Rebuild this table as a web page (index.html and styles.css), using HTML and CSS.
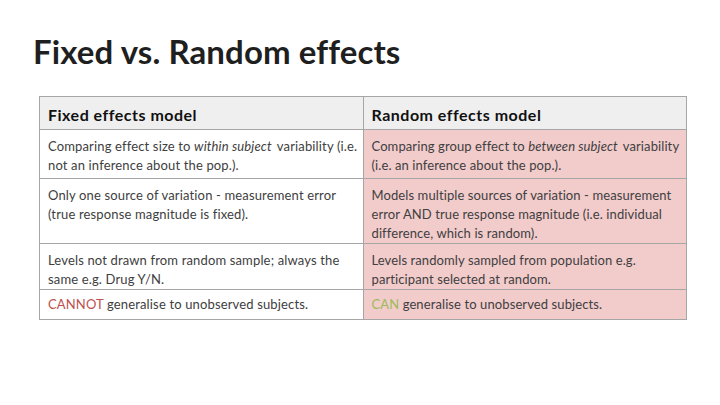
FILE: index.html
```html
<!DOCTYPE html>
<html>
<head>
<meta charset="utf-8">
<link rel="stylesheet" href="styles.css">
</head>
<body>
<div class="slide">
  <h1 class="title">Fixed vs. Random effects</h1>
  <table class="cmp">
    <tr class="r-head">
      <th>Fixed effects model</th>
      <th>Random effects model</th>
    </tr>
    <tr class="r1">
      <td class="fixed">Comparing effect size to <em>within subject</em> variability (i.e. not an inference about the pop.).</td>
      <td class="rand">Comparing group effect to <em>between subject</em> variability (i.e. an inference about the pop.).</td>
    </tr>
    <tr class="r2">
      <td class="fixed">Only one source of variation - measurement error (true response magnitude is fixed).</td>
      <td class="rand">Models multiple sources of variation - measurement error AND true response magnitude (i.e. individual difference, which is random).</td>
    </tr>
    <tr class="r3">
      <td class="fixed">Levels not drawn from random sample; always the same e.g. Drug Y/N.</td>
      <td class="rand">Levels randomly sampled from population e.g. participant selected at random.</td>
    </tr>
    <tr class="r4">
      <td class="fixed"><span class="no">CANNOT</span> generalise to unobserved subjects.</td>
      <td class="rand"><span class="yes">CAN</span> generalise to unobserved subjects.</td>
    </tr>
  </table>
</div>
</body>
</html>
```
FILE: styles.css
```css
html, body {
  margin: 0;
  padding: 0;
  background: #ffffff;
}
.slide {
  width: 720px;
  height: 405px;
  padding: 31px 0 0 33px;
  box-sizing: border-box;
  font-family: "Lato", "Open Sans", sans-serif;
}
.title {
  margin: 0;
  font-size: 33px;
  line-height: 40px;
  font-weight: 700;
  color: #1f1f1f;
  letter-spacing: 0.1px;
}
.cmp {
  margin: 25px 0 0 6px;
  border-collapse: collapse;
  width: 648px;
  table-layout: fixed;
}
.cmp th, .cmp td {
  border: 1px solid #a6a6a6;
  text-align: left;
  vertical-align: top;
  padding: 0 1px 0 8px;
}
.cmp th {
  background: #efefef;
  font-size: 16px;
  letter-spacing: 0.5px;
  font-weight: 700;
  color: #111;
  height: 33px;
  vertical-align: middle;
  padding-top: 2px;
  box-sizing: border-box;
}
.cmp td {
  font-size: 13px;
  letter-spacing: 0.15px;
  line-height: 19px;
  color: #404040;
  padding-top: 7px;
  box-sizing: border-box;
}
.cmp td em {
  font-style: italic;
  padding-right: 2px;
}
.cmp td.rand {
  background: #f2cbcb;
  letter-spacing: 0.1px;
}
.r1 td { height: 49px; }
.r2 td { height: 65px; }
.r3 td { height: 46px; }
.r4 td { height: 30px; padding-top: 5px; }
.no { color: #c0504d; }
.yes { color: #9bbb59; }
```
